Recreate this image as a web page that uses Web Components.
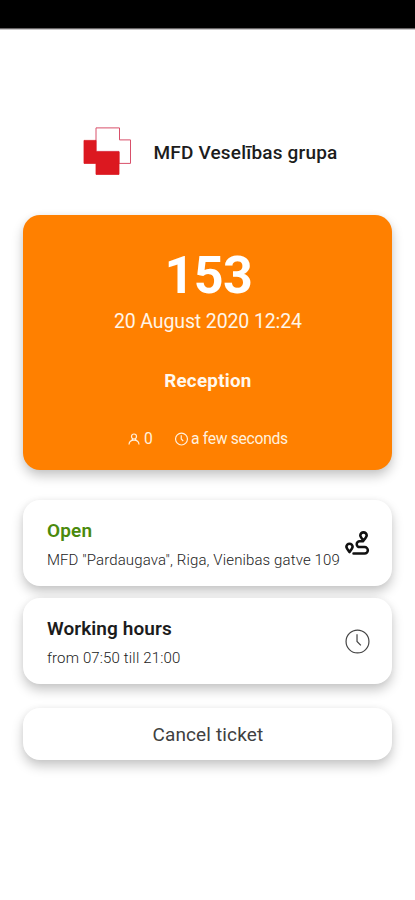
<!DOCTYPE html>
<html lang="en">
<head>
<meta charset="utf-8">
<title>Queue ticket</title>
<style>
html,body{margin:0;height:100%;background:#fff;font-family:Roboto,"Liberation Sans",sans-serif;overflow:hidden}
</style>
</head>
<body>
<queue-app></queue-app>
<script>
const define = (name, html, setup) => {
  const template = document.createElement('template');
  template.innerHTML = html;
  customElements.define(name, class extends HTMLElement {
    constructor() {
      super();
      this.attachShadow({mode: 'open'}).append(template.content.cloneNode(true));
    }
    connectedCallback() { if (setup) setup(this); }
  });
};

// One line of text, tracked so that it spans the given width.
define('tracked-text', `
<style>:host{display:block;white-space:nowrap}span{display:inline-block}</style><span><slot></slot></span>`,
el => {
  const span = el.shadowRoot.querySelector('span');
  const want = parseFloat(el.getAttribute('span'));
  const fit = () => {
    span.style.letterSpacing = '0';
    const gap = (want - span.getBoundingClientRect().width) / el.textContent.length;
    span.style.letterSpacing = gap.toFixed(3) + 'px';
  };
  requestAnimationFrame(fit);
});

define('status-bar', `
<style>:host{display:block;height:28px;background:#000;border-bottom:1px solid #676465;box-shadow:0 1px 0 #c9c7c8;flex:none}</style>`);

define('clinic-brand', `
<style>
:host{display:flex;align-items:center;height:50px;margin:98px 0 0 82px}
svg{display:block;width:50px;height:50px;flex:none}
tracked-text{margin-left:21.500px;font-size:19px;font-weight:500;line-height:24px;color:#1c1c1c;padding-top:1px}
</style>
<svg viewBox="0 0 50 50">
<path d="M14 .9H37.500V12.900H48.500V36.400H37V24.400H14Z" fill="#fff" stroke="#d8506a" stroke-width="1"/>
<path d="M2 13.400H14V24.900H37V47.400H14V36.400H2Z" fill="#dc1820" stroke="#dc1820" stroke-width=".8"/>
</svg>
<tracked-text span="184">MFD Veselības grupa</tracked-text>`);

define('person-icon', `
<style>:host{display:block;width:12px;height:12px}svg{display:block}</style>
<svg width="12" height="12" viewBox="0 0 12 12" fill="none" stroke="currentColor" stroke-width="1.200"><circle cx="6" cy="3.500" r="2.500"/><path d="M1 11.500C1.200 8.600 3.200 7.200 6 7.200S10.800 8.600 11 11.500M4.600 5.500 3.800 7.600M7.400 5.500 8.200 7.600"/></svg>`);

define('clock-icon', `
<style>:host{display:block;width:25px;height:25px}svg{display:block;width:100%;height:100%}path,circle{stroke-width:var(--stroke,1.3)}</style>
<svg viewBox="0 0 26 26" fill="none" stroke="currentColor"><circle cx="13" cy="13" r="11.900"/><path d="M12.500 5.500V13L16.500 17"/></svg>`);

define('route-icon', `
<style>:host{display:block;width:26px;height:26px}svg{display:block}</style>
<svg width="26" height="26" viewBox="0 0 26 26" fill="none" stroke="#111" stroke-width="2.600" stroke-linecap="round" stroke-linejoin="round">
<path d="M19.500 9.500C17.500 7.200 16.300 5.700 16.300 4.500A3.200 3.100 0 0 1 22.700 4.500C22.700 5.700 21.500 7.200 19.500 9.500Z"/>
<path d="M5.500 21C3.500 18.500 2.400 17.200 2.400 15.800A3.100 3 0 0 1 8.600 15.800C8.600 17.200 7.500 18.500 5.500 21Z"/>
<path d="M19 10.300H15.600A2.900 2.900 0 0 0 15.600 16.100H20.600A3.100 3.100 0 0 1 20.600 22.600H9.500" stroke-width="2.500"/></svg>`);

define('ticket-card', `
<style>
:host{display:flex;flex-direction:column;align-items:center;box-sizing:border-box;height:255px;padding-top:30px;border-radius:17px;background:#ff8000;color:#fff;box-shadow:var(--lift)}
.number{font-size:52px;font-weight:700;line-height:62px;margin-left:1px}
.date{font-size:19.500px;line-height:26px;margin-top:2px;color:#fff5e8}
.place{font-size:18.800px;font-weight:700;line-height:26px;margin-top:33px;color:#fff8ee}
.meta{display:flex;align-items:center;margin-top:35px;font-size:15.700px;line-height:20px;color:#fff0de;width:160px}
person-icon{margin-right:4px}
clock-icon{width:14px;height:14px;--stroke:2.3;margin:0 3px 0 22px}
</style>
<tracked-text class="number" span="88">153</tracked-text>
<tracked-text class="date" span="188">20 August 2020 12:24</tracked-text>
<tracked-text class="place" span="87.500">Reception</tracked-text>
<div class="meta"><person-icon></person-icon><tracked-text span="9">0</tracked-text><clock-icon></clock-icon><tracked-text span="97">a few seconds</tracked-text></div>`);

define('info-card', `
<style>
:host{display:flex;align-items:center;justify-content:space-between;box-sizing:border-box;height:86px;padding:0 22.500px 0 23.500px;border-radius:17px;background:#fff;box-shadow:var(--lift)}
.copy{display:flex;flex-direction:column;gap:5px;width:294px;flex:none;padding-top:4px}
::slotted([slot=title]){font-size:19px;font-weight:600;line-height:24px}
::slotted([slot=detail]){font-size:15px;line-height:24px;font-weight:300;color:#222}
</style>
<div class="copy"><slot name="title"></slot><slot name="detail"></slot></div><slot name="icon"></slot>`);

define('cancel-button', `
<style>:host{display:flex;align-items:center;justify-content:center;box-sizing:border-box;height:52px;padding-top:1.500px;border-radius:17px;background:#fff;color:#404040;font-size:19px;box-shadow:var(--lift)}</style>
<tracked-text span="111">Cancel ticket</tracked-text>`);

define('queue-app', `
<style>
:host{display:flex;flex-direction:column;height:900px;width:415px;background:#fff;--lift:0 6px 12px rgba(0,0,0,.22),0 0 6px rgba(0,0,0,.04)}
main{display:flex;flex-direction:column;margin:38px 22.600px 0 23.400px}
.status{margin-top:30px}
.hours{margin-top:12px}
cancel-button{margin-top:24px}
.open{color:#4b8a0c}
.heading{color:#1c1c1c}
clock-icon{color:#444;--stroke:1.25}
route-icon{margin-top:2px}
</style>
<status-bar></status-bar>
<clinic-brand></clinic-brand>
<main>
<ticket-card></ticket-card>
<info-card class="status"><tracked-text slot="title" class="open" span="45.500">Open</tracked-text><tracked-text slot="detail" span="293">MFD "Pardaugava", Riga, Vienibas gatve 109</tracked-text><route-icon slot="icon"></route-icon></info-card>
<info-card class="hours"><tracked-text slot="title" class="heading" span="125">Working hours</tracked-text><tracked-text slot="detail" span="133.500">from 07:50 till 21:00</tracked-text><clock-icon slot="icon"></clock-icon></info-card>
<cancel-button></cancel-button>
</main>`);
</script>
</body>
</html>
